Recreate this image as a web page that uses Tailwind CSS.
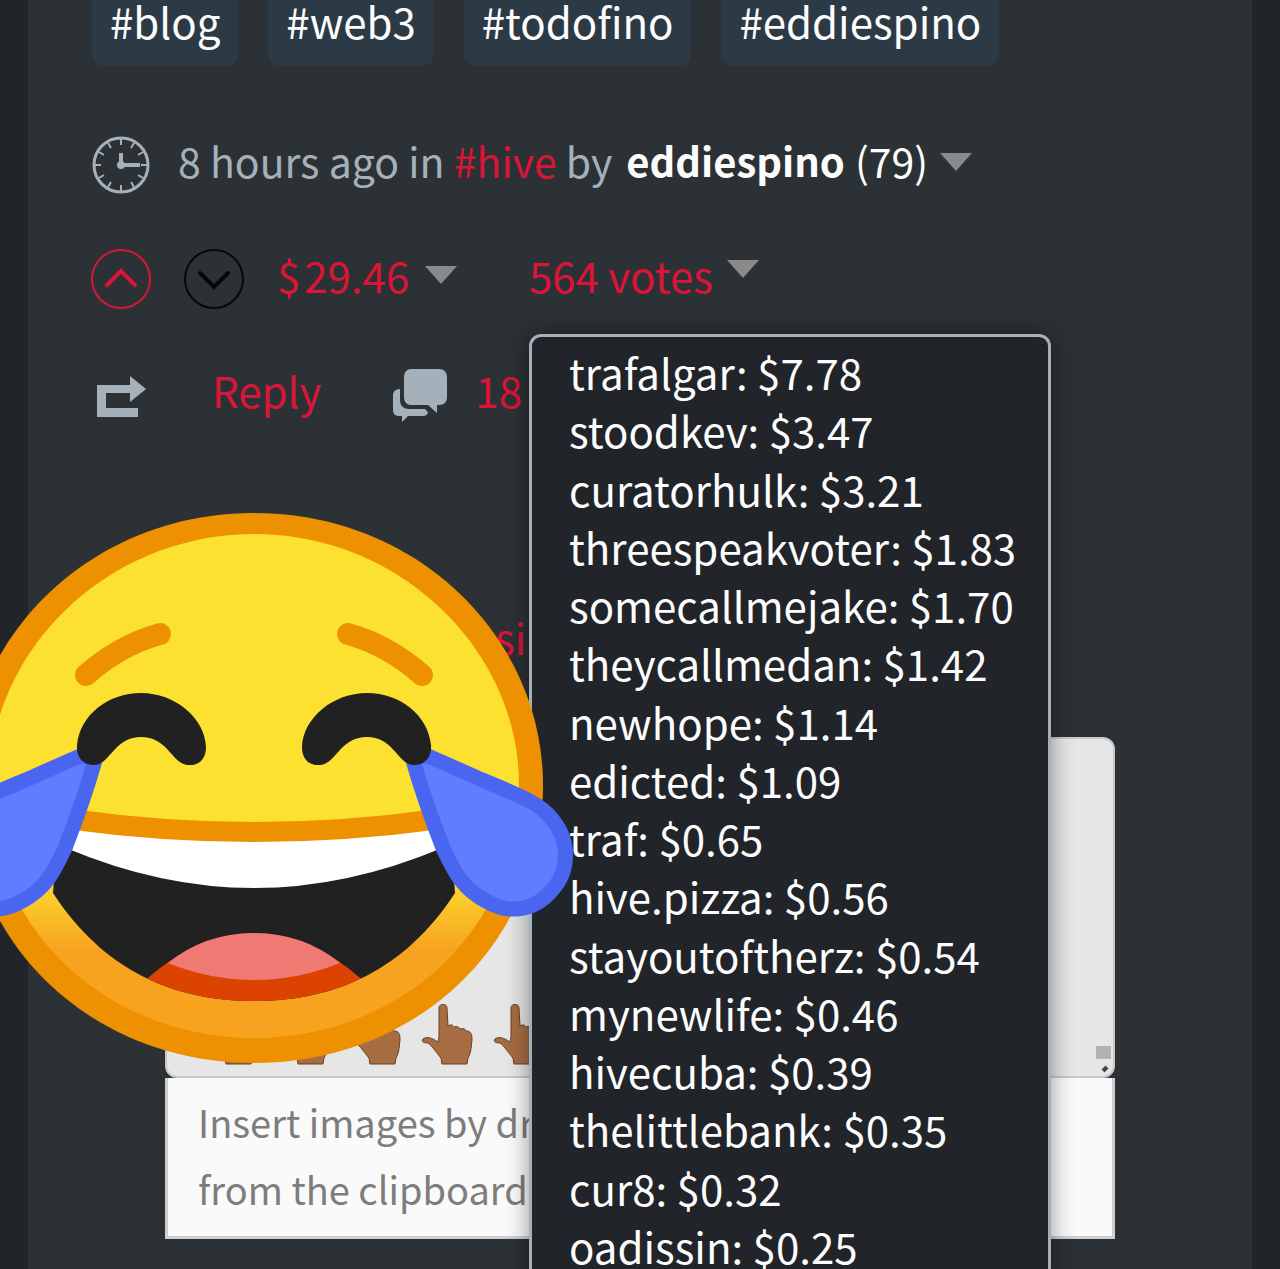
<!DOCTYPE html>
<html lang="en">
<head>
    <meta charset="UTF-8">
    <meta name="viewport" content="width=device-width, initial-scale=1.0">
    <title>Hive post by eddiespino</title>
    <script src="https://cdn.jsdelivr.net/npm/@tailwindcss/browser@4"></script>
</head>
<body class="bg-[#212429] font-['Noto_Sans_CJK_SC',sans-serif] text-[42px] leading-[58px]">
    <div class="relative h-screen overflow-hidden px-7">
        <main class="min-h-screen bg-[#2c3135] px-16 text-[#a5b1ba]">
            <!-- Tags -->
            <div class="flex gap-[30px] whitespace-nowrap text-[#fcfcfc]">
                <a href="#" class="h-[66px] rounded-b-xl bg-[#2c3a46] px-[18px] leading-[42px]">#blog</a>
                <a href="#" class="h-[66px] rounded-b-xl bg-[#2c3a46] px-[18px] leading-[42px]">#web3</a>
                <a href="#" class="h-[66px] rounded-b-xl bg-[#2c3a46] px-[18px] leading-[42px]">#todofino</a>
                <a href="#" class="h-[66px] rounded-b-xl bg-[#2c3a46] px-[18px] leading-[42px]">#eddiespino</a>
            </div>

            <!-- Author line -->
            <div class="mt-[60px] flex items-center whitespace-nowrap">
                <svg class="mt-[10px] mr-7 h-[58px] w-[58px] shrink-0" viewBox="0 0 58 58" fill="none" stroke="#a5b1ba">
                    <circle cx="29" cy="29" r="27" stroke-width="3"/>
                    <path stroke-width="2" d="M29 3v6M29 49v6M3 29h6M49 29h6M16 7l3 5M42 7l-3 5M7 16l5 3M51 16l-5 3M7 42l5-3M51 42l-5-3M16 51l3-5M42 51l-3-5"/>
                    <path stroke-width="4" d="M29 17v12h19"/>
                    <circle cx="29" cy="29" r="4" fill="#a5b1ba" stroke="none"/>
                </svg>
                <span class="text-[41px]">8 hours ago in <a href="#" class="text-[#da1537]">#hive</a> by</span>
                <button type="button" class="ml-[14px] flex items-center text-[#fcfcfc]">
                    <strong class="text-[40px] font-bold">eddiespino</strong>
                    <span class="ml-[10px] text-[41px]">(79)</span>
                    <svg class="mt-1 ml-3 h-[18px] w-8" viewBox="0 0 32 18"><path fill="#8a8a8a" d="M0 0h32L16 18z"/></svg>
                </button>
            </div>

            <!-- Voting -->
            <div class="mt-[46px] flex items-center whitespace-nowrap text-[#da1537]">
                <button type="button" aria-label="Upvote" class="-ml-[2px] pt-2">
                    <svg class="h-[62px] w-[62px]" viewBox="0 0 62 62" fill="none" stroke="#da1537">
                        <circle cx="31" cy="31" r="29" stroke-width="2"/>
                        <path stroke-width="4" stroke-linecap="round" d="M17 37l14-14 14 14"/>
                    </svg>
                </button>
                <button type="button" aria-label="Downvote" class="ml-[31px] pt-2">
                    <svg class="h-[62px] w-[62px]" viewBox="0 0 62 62" fill="none" stroke="#050709">
                        <circle cx="31" cy="31" r="29" stroke-width="2"/>
                        <path stroke-width="4" stroke-linecap="round" d="M17 25l14 14 14-14"/>
                    </svg>
                </button>
                <button type="button" class="ml-8 flex w-[252px] items-center">
                    <span>$</span>
                    <span class="ml-1">29.46</span>
                    <svg class="ml-4 h-[18px] w-8" viewBox="0 0 32 18"><path fill="#8a8a8a" d="M0 0h32L16 18z"/></svg>
                </button>
                <div class="relative">
                    <button type="button" class="flex items-center">
                        <span>564 votes</span>
                        <svg class="mb-3 ml-[14px] h-[18px] w-8" viewBox="0 0 32 18"><path fill="#8a8a8a" d="M0 0h32L16 18z"/></svg>
                    </button>
                    <ul class="absolute top-[88px] left-0 z-10 grid h-[960px] w-[522px] rounded-xl border-[3px] border-[#a5b1ba] bg-[#212429] pt-[6px] pb-4 pl-[37px] text-[#fcfcfc] shadow-[0_0_24px_rgba(0,0,0,0.4)]">
                        <li>trafalgar: $7.78</li>
                        <li>stoodkev: $3.47</li>
                        <li>curatorhulk: $3.21</li>
                        <li>threespeakvoter: $1.83</li>
                        <li>somecallmejake: $1.70</li>
                        <li>theycallmedan: $1.42</li>
                        <li>newhope: $1.14</li>
                        <li>edicted: $1.09</li>
                        <li>traf: $0.65</li>
                        <li>hive.pizza: $0.56</li>
                        <li>stayoutoftherz: $0.54</li>
                        <li>mynewlife: $0.46</li>
                        <li>hivecuba: $0.39</li>
                        <li>thelittlebank: $0.35</li>
                        <li>cur8: $0.32</li>
                        <li>oadissin: $0.25</li>
                    </ul>
                </div>
            </div>

            <!-- Reblog, reply, comments -->
            <div class="mt-[48px] flex items-center whitespace-nowrap text-[#da1537]">
                <button type="button" aria-label="Reblog" class="ml-1 pt-[14px]">
                    <svg class="h-[42px] w-[50px]" viewBox="0 0 50 42"><path fill="#a5b1ba" d="M1 9h33V0l16 13-16 13v-9H10v15h32v9H1z"/></svg>
                </button>
                <a href="#" class="ml-[66px]">Reply</a>
                <a href="#" class="ml-[72px] flex items-center gap-7">
                    <svg class="mt-[10px] h-[54px] w-[54px]" viewBox="0 0 54 54" fill="#a5b1ba">
                        <path d="M18 1h28c5 0 8 3 8 8v20c0 5-3 8-8 8h-2v8l-9-8H18c-4 0-7-3-7-8V9c0-5 3-8 7-8z"/>
                        <path d="M7 21v11c0 6 4 9 9 9h16l3 3c0 2-2 4-5 4H15l-6 6v-6H6c-4 0-6-2-6-7V28c0-4 2-7 7-7z"/>
                    </svg>
                    <span>18</span>
                </a>
            </div>

            <!-- Reply editor -->
            <form class="mx-[73px] mt-[186px]">
                <a href="#" class="ml-[330px] block text-[#da1537]">si</a>
                <div class="relative mt-[71px]">
                    <textarea aria-label="Reply" class="block h-[341px] w-full resize-none rounded-xl border-2 border-[#c9c9c9] bg-[#e6e6e6] outline-none"></textarea>
                    <svg class="absolute bottom-3 left-[41px] h-[62px] w-[340px]" viewBox="0 0 340 62">
                        <defs>
                            <path id="hand" fill="#a66c42" stroke="#6b3f20" stroke-width="1" d="M20 60l-1-6C14 48 10 42 6 39 1 39-1 37 1 35c4-3 9-1 15 3l1-5V4c0-5 8-5 8 0l1 18c3-2 5-1 6 1 3-1 5 0 6 2 4-1 5 0 6 2 5 0 6 3 6 9-1 9-1 13-4 18l-1 6z"/>
                        </defs>
                        <use href="#hand" x="0"/>
                        <use href="#hand" x="72"/>
                        <use href="#hand" x="144"/>
                        <use href="#hand" x="216"/>
                        <use href="#hand" x="288"/>
                    </svg>
                    <svg class="absolute right-[3px] bottom-1 h-7 w-4" viewBox="0 0 16 28">
                        <path fill="#b2b2b2" d="M0 0h15v13H0z"/>
                        <path stroke="#444" stroke-width="4" d="M7 25l4-4"/>
                    </svg>
                </div>
                <p class="overflow-hidden border-[3px] border-t-0 border-[#cfcfcf] bg-[#fafafa] px-[30px] pt-[10px] pb-[14px] text-[38px] leading-[67px] whitespace-nowrap text-[#7d7d7d]">Insert images by dr<br>from the clipboard,</p>
            </form>
        </main>

        <!-- Tears of joy -->
        <svg class="absolute top-[510px] left-0 z-20 h-[556px] w-[576px]" viewBox="0 510 576 556">
            <defs>
                <linearGradient id="skin" gradientUnits="userSpaceOnUse" x1="0" y1="870" x2="0" y2="950">
                    <stop offset="0" stop-color="#fde130"/>
                    <stop offset="1" stop-color="#f7a320"/>
                </linearGradient>
                <clipPath id="mouth">
                    <path d="M60 800L448 800L455 893C405 970 335 1001 254 1001S103 970 53 893L60 800z"/>
                </clipPath>
                <g id="side">
                    <path fill="none" stroke="#ed9100" stroke-width="22" stroke-linecap="round" d="M422 675Q388 645 348 634"/>
                    <path fill="#617cff" stroke="#4a66f0" stroke-width="15" stroke-linejoin="round" d="M412 757L428 756L480 779C518 795 540 803 552 819C571 842 569 872 552 890C534 912 508 914 486 901C463 889 454 872 443 848C430 815 420 785 412 757Z"/>
                    <path fill="#212121" d="M431 745C428 715 400 693 367 693C333 693 303 718 302 747C302 760 310 766 320 765C336 764 340 737 367 737C394 737 398 765 414 765C425 765 432 757 431 745Z"/>
                </g>
            </defs>
            <path fill="#ed9100" d="M254 513C420 513 543 640 543 785C543 945 415 1063 254 1063S-35 945-35 785C-35 640 88 513 254 513z"/>
            <path fill="url(#skin)" d="M254 534C400 534 519 650 519 785C519 930 400 1038 254 1038S-11 930-11 785C-11 650 108 534 254 534z"/>
            <g clip-path="url(#mouth)">
                <path fill="#212121" d="M40 835h430v180H40z"/>
                <path fill="#fff" d="M66 826h376v22Q347 888 254 888T66 848z"/>
                <path fill="#dc4200" d="M130 995Q190 933 254 933T378 995V1010H130z"/>
                <path fill="#ef7a73" d="M168 963Q205 933 254 933T340 963Q298 980 254 980T168 963z"/>
            </g>
            <path fill="#ed9100" d="M72 809Q254 835 436 809L442 829Q254 855 66 829z"/>
            <use href="#side"/>
            <use href="#side" transform="translate(508 0) scale(-1 1)"/>
        </svg>
    </div>
</body>
</html>
